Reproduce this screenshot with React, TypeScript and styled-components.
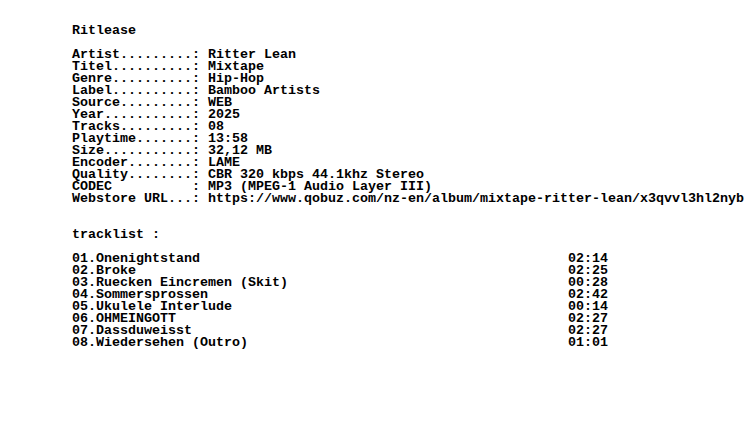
import React from "react";
import styled, { createGlobalStyle } from "styled-components";

const Global = createGlobalStyle`
  html, body { margin: 0; padding: 0; background: #ffffff; }
  body { overflow: hidden; }
`;

const Page = styled.div`
  width: 752px;
  height: 444px;
  box-sizing: border-box;
  padding: 25px 0 0 72px;
  background: #ffffff;
  color: #000000;
  overflow: hidden;
`;

const Nfo = styled.div`
  font-family: "Liberation Mono", "DejaVu Sans Mono", monospace;
  font-size: 13.333px;
  font-weight: 700;
  line-height: 12px;
  white-space: pre;
  display: flex;
  flex-direction: column;
`;

const Line = styled.div<{ $gapAfter?: number }>`
  height: 12px;
  margin-bottom: ${(p) => (p.$gapAfter ?? 0) * 12}px;
`;

const InfoRow = styled.div`
  display: grid;
  grid-template-columns: 136px auto;
  height: 12px;
`;

const TrackRow = styled.div`
  display: grid;
  grid-template-columns: 496px auto;
  height: 12px;
`;

const Section = styled.div<{ $gapAfter?: number }>`
  display: flex;
  flex-direction: column;
  margin-bottom: ${(p) => (p.$gapAfter ?? 0) * 12}px;
`;

const info: [string, string][] = [
  ["Artist.........: ", "Ritter Lean"],
  ["Titel..........: ", "Mixtape"],
  ["Genre..........: ", "Hip-Hop"],
  ["Label..........: ", "Bamboo Artists"],
  ["Source.........: ", "WEB"],
  ["Year...........: ", "2025"],
  ["Tracks.........: ", "08"],
  ["Playtime.......: ", "13:58"],
  ["Size...........: ", "32,12 MB"],
  ["Encoder........: ", "LAME"],
  ["Quality........: ", "CBR 320 kbps 44.1khz Stereo"],
  ["CODEC          : ", "MP3 (MPEG-1 Audio Layer III)"],
  ["Webstore URL...: ", "https://www.qobuz.com/nz-en/album/mixtape-ritter-lean/x3qvvl3hl2nyb"],
];

const tracks: [string, string][] = [
  ["01.Onenightstand", "02:14"],
  ["02.Broke", "02:25"],
  ["03.Ruecken Eincremen (Skit)", "00:28"],
  ["04.Sommersprossen", "02:42"],
  ["05.Ukulele Interlude", "00:14"],
  ["06.OHMEINGOTT", "02:27"],
  ["07.Dassduweisst", "02:27"],
  ["08.Wiedersehen (Outro)", "01:01"],
];

export default function App() {
  return (
    <>
      <Global />
      <Page>
        <Nfo>
          <Line $gapAfter={1}>Ritlease</Line>
          <Section $gapAfter={2}>
            {info.map(([k, v]) => (
              <InfoRow key={k}>
                <span>{k}</span>
                <span>{v}</span>
              </InfoRow>
            ))}
          </Section>
          <Line $gapAfter={1}>tracklist :</Line>
          <Section>
            {tracks.map(([t, d]) => (
              <TrackRow key={t}>
                <span>{t}</span>
                <span>{d}</span>
              </TrackRow>
            ))}
          </Section>
        </Nfo>
      </Page>
    </>
  );
}
